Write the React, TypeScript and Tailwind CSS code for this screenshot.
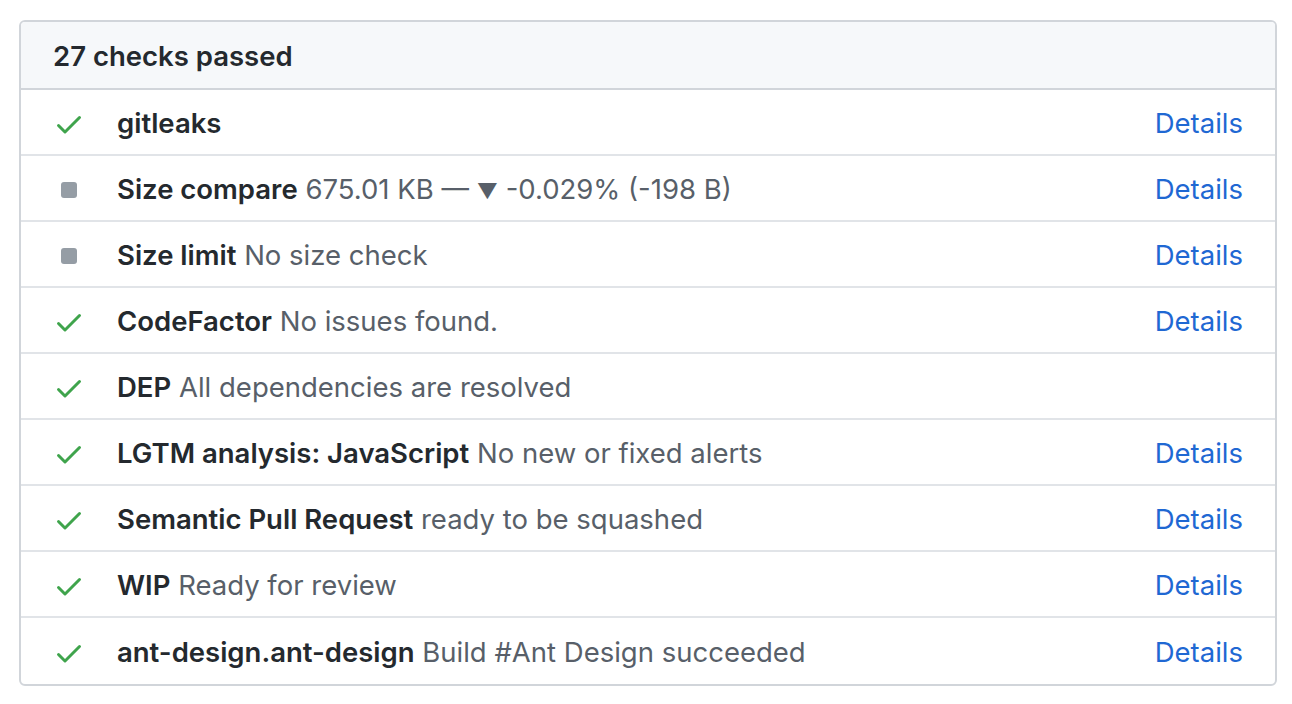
const checks: { status: "ok" | "neutral"; name: string; desc?: React.ReactNode; details: boolean }[] = [
  { status: "ok", name: "gitleaks", details: true },
  {
    status: "neutral",
    name: "Size compare",
    desc: (
      <>
        675.01 KB — <span className="text-[21px]">▼</span> -0.029% (-198 B)
      </>
    ),
    details: true,
  },
  { status: "neutral", name: "Size limit", desc: "No size check", details: true },
  { status: "ok", name: "CodeFactor", desc: "No issues found.", details: true },
  { status: "ok", name: "DEP", desc: "All dependencies are resolved", details: false },
  { status: "ok", name: "LGTM analysis: JavaScript", desc: "No new or fixed alerts", details: true },
  { status: "ok", name: "Semantic Pull Request", desc: "ready to be squashed", details: true },
  { status: "ok", name: "WIP", desc: "Ready for review", details: true },
  { status: "ok", name: "ant-design.ant-design", desc: "Build #Ant Design succeeded", details: true },
];

function CheckIcon() {
  return (
    <svg width="32" height="32" viewBox="0 0 16 16" fill="#3fa44c" aria-hidden>
      <path d="M13.78 4.22a.75.75 0 010 1.06l-7.25 7.25a.75.75 0 01-1.06 0L2.22 9.28a.75.75 0 011.06-1.06L6 10.94l6.72-6.72a.75.75 0 011.06 0z" />
    </svg>
  );
}

function StatusIcon({ status }: { status: "ok" | "neutral" }) {
  if (status === "ok") return <CheckIcon />;
  return (
    <div className="w-8 h-8 flex items-center justify-center">
      <div className="w-4 h-4 rounded-[3px] bg-[#959da5]" />
    </div>
  );
}

export default function App() {
  return (
    <div
      className="min-h-screen bg-white pt-5 pl-[19px] pr-[15px]"
      style={{ fontFamily: "Inter, 'Liberation Sans', sans-serif" }}
    >
      <div className="border-2 border-[#d1d5da] rounded-md overflow-hidden">
        <div className="h-[68px] bg-[#f6f8fa] border-b-2 border-[#d1d5da] flex items-center px-8 pt-[4px]">
          <span className="text-[27.5px] font-semibold text-[#24292e]">27 checks passed</span>
        </div>
        {checks.map((c, i) => (
          <div
            key={c.name}
            className={
              "h-[66px] flex items-center pl-8 pr-8 pt-[4px] " +
              (i < checks.length - 1 ? "border-b-2 border-[#e1e4e8]" : "")
            }
          >
            <StatusIcon status={c.status} />
            <div className="ml-[32px] flex-1 text-[27.5px] text-[#585f69] whitespace-nowrap">
              <span className="font-semibold text-[#24292e]">{c.name}</span>
              {c.desc && <span> {c.desc}</span>}
            </div>
            {c.details && <a className="text-[27.5px] text-[#1f68d3]">Details</a>}
          </div>
        ))}
      </div>
    </div>
  );
}
